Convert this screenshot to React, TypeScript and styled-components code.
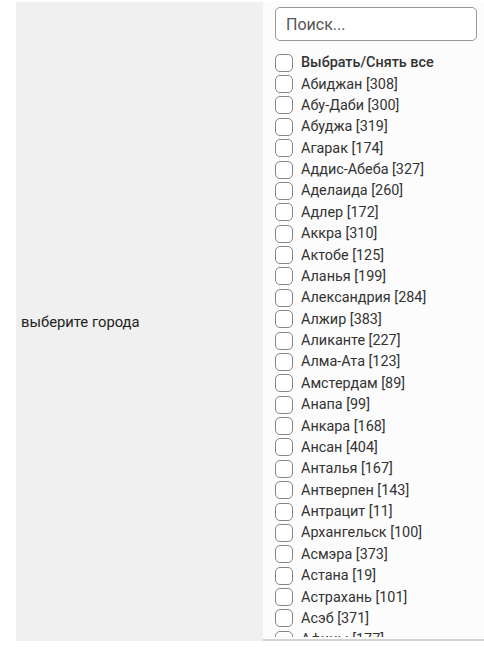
import React from "react";
import styled, { createGlobalStyle } from "styled-components";

const Global = createGlobalStyle`
  html, body { margin: 0; padding: 0; background: #ffffff; }
  body { font-family: Roboto, "Noto Sans", Arial, sans-serif; }
`;

const Page = styled.div`
  display: flex;
  padding: 2px 0 0 16px;
  height: 639px;
  overflow: hidden;
`;

const LabelCell = styled.div`
  width: 247px;
  flex: none;
  background: #f0f0f0;
  display: flex;
  align-items: center;
  padding-left: 5px;
  box-sizing: border-box;
  font-size: 14.8px;
  color: #222;
`;

const Panel = styled.div`
  flex: 1;
  background: #fcfcfc;
  border-bottom: 2px solid #d4d4d4;
  box-sizing: border-box;
  display: flex;
  flex-direction: column;
  padding: 5px 6px 0 12px;
  overflow: hidden;
`;

const Search = styled.input`
  width: 202px;
  height: 34px;
  box-sizing: border-box;
  border: 1px solid #999;
  border-radius: 5px;
  padding: 0 10px;
  font-family: Roboto, "Noto Sans", Arial, sans-serif;
  font-size: 16px;
  color: #333;
  background: #fff;
  outline: none;
  flex: none;
  &::placeholder { color: #555; }
`;

const List = styled.div`
  margin-top: 11px;
  flex: 1;
  overflow: hidden;
  margin-bottom: 2px;
`;

const Row = styled.label<{ $bold?: boolean }>`
  display: flex;
  align-items: center;
  height: 21.38px;
  gap: 8px;
  font-size: 14.4px;
  color: #333;
  font-weight: ${(p) => (p.$bold ? 500 : 400)};
  white-space: nowrap;
`;

const Box = styled.span`
  width: 16px;
  height: 16px;
  border: 1px solid #858585;
  border-radius: 5px;
  background: #fff;
  flex: none;
`;

const cities = [
  "Абиджан [308]",
  "Абу-Даби [300]",
  "Абуджа [319]",
  "Агарак [174]",
  "Аддис-Абеба [327]",
  "Аделаида [260]",
  "Адлер [172]",
  "Аккра [310]",
  "Актобе [125]",
  "Аланья [199]",
  "Александрия [284]",
  "Алжир [383]",
  "Аликанте [227]",
  "Алма-Ата [123]",
  "Амстердам [89]",
  "Анапа [99]",
  "Анкара [168]",
  "Ансан [404]",
  "Анталья [167]",
  "Антверпен [143]",
  "Антрацит [11]",
  "Архангельск [100]",
  "Асмэра [373]",
  "Астана [19]",
  "Астрахань [101]",
  "Асэб [371]",
  "Афины [177]",
  "Ашхабад [52]",
];

export default function App() {
  return (
    <>
      <Global />
      <Page>
        <LabelCell>выберите города</LabelCell>
        <Panel>
          <Search placeholder="Поиск..." />
          <List>
            <Row $bold>
              <Box />
              Выбрать/Снять все
            </Row>
            {cities.map((c) => (
              <Row key={c}>
                <Box />
                {c}
              </Row>
            ))}
          </List>
        </Panel>
      </Page>
    </>
  );
}
